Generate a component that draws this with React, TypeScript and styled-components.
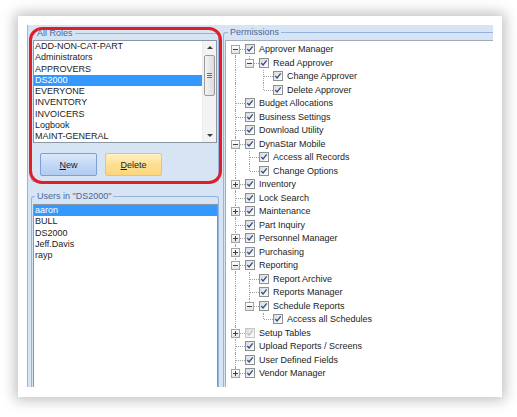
import React from "react";
import styled, { createGlobalStyle } from "styled-components";

type PermNode = {
  label: string;
  open?: boolean;
  collapsed?: boolean;
  dim?: boolean;
  children?: PermNode[];
};

type FlatRow = {
  label: string;
  level: number;
  guides: boolean[];
  hasNext: boolean;
  firstRoot: boolean;
  expander: "open" | "closed" | null;
  dim: boolean;
};

const roles = [
  "ADD-NON-CAT-PART",
  "Administrators",
  "APPROVERS",
  "DS2000",
  "EVERYONE",
  "INVENTORY",
  "INVOICERS",
  "Logbook",
  "MAINT-GENERAL",
];

const users = ["aaron", "BULL", "DS2000", "Jeff.Davis", "rayp"];

const permissions: PermNode[] = [
  {
    label: "Approver Manager",
    open: true,
    children: [
      {
        label: "Read Approver",
        open: true,
        children: [{ label: "Change Approver" }, { label: "Delete Approver" }],
      },
    ],
  },
  { label: "Budget Allocations" },
  { label: "Business Settings" },
  { label: "Download Utility" },
  {
    label: "DynaStar Mobile",
    open: true,
    children: [{ label: "Access all Records" }, { label: "Change Options" }],
  },
  { label: "Inventory", collapsed: true },
  { label: "Lock Search" },
  { label: "Maintenance", collapsed: true },
  { label: "Part Inquiry" },
  { label: "Personnel Manager", collapsed: true },
  { label: "Purchasing", collapsed: true },
  {
    label: "Reporting",
    open: true,
    children: [
      { label: "Report Archive" },
      { label: "Reports Manager" },
      {
        label: "Schedule Reports",
        open: true,
        children: [{ label: "Access all Schedules" }],
      },
    ],
  },
  { label: "Setup Tables", collapsed: true, dim: true },
  { label: "Upload Reports / Screens" },
  { label: "User Defined Fields" },
  { label: "Vendor Manager", collapsed: true },
];

function flatten(nodes: PermNode[], level = 0, guides: boolean[] = []): FlatRow[] {
  const out: FlatRow[] = [];
  nodes.forEach((n, i) => {
    const hasNext = i < nodes.length - 1;
    out.push({
      label: n.label,
      level,
      guides,
      hasNext,
      firstRoot: level === 0 && i === 0,
      expander: n.open ? "open" : n.collapsed ? "closed" : null,
      dim: !!n.dim,
    });
    if (n.open && n.children) {
      out.push(...flatten(n.children, level + 1, [...guides, hasNext]));
    }
  });
  return out;
}

const GlobalStyle = createGlobalStyle`
  html, body {
    margin: 0;
    padding: 0;
    background: #ffffff;
  }
  body {
    font-family: "Liberation Sans", Arial, sans-serif;
  }
`;

const Page = styled.div`
  width: 517px;
  height: 417px;
  overflow: hidden;
  box-sizing: border-box;
  padding: 16px 0 0 18px;
  background: #ffffff;
`;

const Window = styled.div`
  width: 484px;
  height: 381px;
  box-sizing: border-box;
  padding: 9px 9px 10px 9px;
  background: #ffffff;
  box-shadow: 0 0 13px 3px rgba(0, 0, 0, 0.26);
`;

const Content = styled.div`
  display: flex;
  height: 100%;
  overflow: hidden;
  background: #d6e4f4;
  border-left: 1px solid #a2b2ca;
  font-size: 9px;
  color: #1c1c1c;
`;

const LeftColumn = styled.div`
  width: 192px;
  display: flex;
  flex-direction: column;
  gap: 9px;
  padding: 3px 1px 0 3px;
  box-sizing: border-box;
`;

const RightColumn = styled.div`
  flex: 1;
  display: flex;
  flex-direction: column;
  min-width: 0;
  padding: 2px 0 0 3px;
`;

const Group = styled.fieldset<{ $grow?: boolean; $open?: boolean }>`
  margin: 0;
  padding: ${(p) => (p.$open ? "3px 0 0 1px" : "2px 1px 5px 1px")};
  min-width: 0;
  border: 1px solid #93b3de;
  border-radius: 3px;
  ${(p) => (p.$grow ? "flex: 1; display: flex; flex-direction: column;" : "")}
  ${(p) => (p.$open ? "border-bottom: none; border-bottom-left-radius: 0; border-bottom-right-radius: 0;" : "")}
`;

const OpenRightGroup = styled(Group)`
  border-right: none;
  border-top-right-radius: 0;
`;

const Legend = styled.legend<{ $offset?: number }>`
  margin-left: ${(p) => p.$offset ?? 2}px;
  padding: 0 2px;
  font-size: 9px;
  line-height: 10px;
  color: #4b6796;
`;

const Highlighted = styled.div`
  position: relative;
`;

const Ring = styled.div`
  position: absolute;
  left: -2px;
  right: -3px;
  top: -1px;
  bottom: -2px;
  border: 3px solid #e31d25;
  border-radius: 13px;
  pointer-events: none;
`;

const ListBox = styled.div<{ $height?: number }>`
  display: flex;
  background: #ffffff;
  border: 1px solid #8d96a4;
  box-sizing: border-box;
  ${(p) => (p.$height ? `height: ${p.$height}px;` : "flex: 1; border-bottom: none;")}
`;

const Items = styled.div`
  flex: 1;
  min-width: 0;
`;

const Item = styled.div<{ $selected?: boolean }>`
  height: 11.25px;
  line-height: 11.25px;
  padding-left: 1px;
  white-space: nowrap;
  color: ${(p) => (p.$selected ? "#ffffff" : "#1c1c1c")};
  background: ${(p) => (p.$selected ? "#3399ff" : "transparent")};
`;

const ScrollBar = styled.div`
  width: 14px;
  display: flex;
  flex-direction: column;
  align-items: center;
  background: #f3f3f3;
  border-left: 1px solid #ececec;
  box-sizing: border-box;
`;

const Arrow = styled.div<{ $down?: boolean }>`
  height: 13px;
  width: 100%;
  display: flex;
  align-items: center;
  justify-content: center;
  &::before {
    content: "";
    border-left: 3px solid transparent;
    border-right: 3px solid transparent;
    ${(p) =>
      p.$down ? "border-top: 3px solid #3c3c3c;" : "border-bottom: 3px solid #3c3c3c;"}
  }
`;

const Thumb = styled.div`
  margin-top: 1px;
  width: 11px;
  height: 41px;
  box-sizing: border-box;
  border: 1px solid #9a9a9a;
  border-radius: 2px;
  background: linear-gradient(90deg, #f4f4f4, #dcdcdc);
  display: flex;
  align-items: center;
  justify-content: center;
  &::before {
    content: "";
    width: 5px;
    height: 5px;
    background: repeating-linear-gradient(
      180deg,
      #6f6f6f 0,
      #6f6f6f 1px,
      transparent 1px,
      transparent 2px
    );
  }
`;

const Spacer = styled.div`
  flex: 1;
`;

const ButtonRow = styled.div`
  display: flex;
  gap: 8px;
  margin: 10px 0 0 7px;
`;

const Button = styled.button<{ $tone: "blue" | "amber" }>`
  width: 57px;
  height: 23px;
  padding: 0;
  border-radius: 2px;
  font-family: "Liberation Sans", Arial, sans-serif;
  font-size: 9px;
  color: #1c1c1c;
  border: 1px solid ${(p) => (p.$tone === "blue" ? "#7d9fd4" : "#e9c46b")};
  background: ${(p) =>
    p.$tone === "blue"
      ? "linear-gradient(180deg, #dbe8fb 0%, #c3d8f6 50%, #b1cbf1 100%)"
      : "linear-gradient(180deg, #fff1c4 0%, #fddf93 50%, #fcd57c 100%)"};
  u {
    text-decoration: underline;
  }
`;

const Tree = styled.div`
  flex: 1;
  background: #ffffff;
  border-top: 1px solid #a3acb8;
  border-left: 1px solid #a3acb8;
  padding: 1.5px 0 0 2px;
`;

const Row = styled.div`
  display: flex;
  align-items: center;
  height: 13.5px;
  white-space: nowrap;
`;

const Guide = styled.div<{ $line: boolean }>`
  width: 14px;
  height: 100%;
  flex: none;
  box-sizing: border-box;
  position: relative;
  &::before {
    content: "";
    position: absolute;
    left: 7px;
    top: 0;
    bottom: 0;
    border-left: ${(p) => (p.$line ? "1px dotted #a0a0a0" : "none")};
  }
`;

const Connector = styled.div<{ $next: boolean; $first: boolean }>`
  width: 17px;
  height: 100%;
  flex: none;
  position: relative;
  &::before {
    content: "";
    position: absolute;
    left: 7px;
    top: ${(p) => (p.$first ? "50%" : "0")};
    bottom: ${(p) => (p.$next ? "0" : "50%")};
    border-left: 1px dotted #a0a0a0;
  }
  &::after {
    content: "";
    position: absolute;
    left: 8px;
    right: 0;
    top: 50%;
    border-top: 1px dotted #a0a0a0;
  }
`;

const Expander = styled.span`
  position: absolute;
  z-index: 1;
  left: 3px;
  top: calc(50% - 4px);
  width: 9px;
  height: 9px;
  box-sizing: border-box;
  border: 1px solid #a4a4a4;
  background: linear-gradient(180deg, #ffffff, #e3e3e3);
  display: flex;
  align-items: center;
  justify-content: center;
`;

const CheckBox = styled.span<{ $dim?: boolean }>`
  width: 10px;
  height: 10px;
  flex: none;
  box-sizing: border-box;
  border: 1px solid ${(p) => (p.$dim ? "#c6c6c6" : "#8e8f8f")};
  background: linear-gradient(135deg, #dadada 0%, #f4f4f4 70%, #ffffff 100%);
  display: flex;
  align-items: center;
  justify-content: center;
`;

const Label = styled.span`
  margin-left: 4px;
  font-size: 9px;
  color: #1c1c1c;
`;

function ExpanderGlyph({ open }: { open: boolean }) {
  return (
    <svg width="7" height="7" viewBox="0 0 7 7">
      <line x1="1" y1="3.5" x2="6" y2="3.5" stroke="#3f3f3f" strokeWidth="1" />
      {!open && <line x1="3.5" y1="1" x2="3.5" y2="6" stroke="#3f3f3f" strokeWidth="1" />}
    </svg>
  );
}

function CheckMark({ dim }: { dim?: boolean }) {
  return (
    <svg width="8" height="8" viewBox="0 0 8 8">
      <path
        d="M1.3 4 L3.1 6 L6.7 1.4"
        fill="none"
        stroke={dim ? "#b9bdc6" : "#2f4f93"}
        strokeWidth="1.3"
      />
    </svg>
  );
}

function TreeRow({ row }: { row: FlatRow }) {
  return (
    <Row>
      {row.guides.map((g, i) => (
        <Guide key={i} $line={g} />
      ))}
      <Connector $next={row.hasNext} $first={row.firstRoot}>
        {row.expander && (
          <Expander>
            <ExpanderGlyph open={row.expander === "open"} />
          </Expander>
        )}
      </Connector>
      <CheckBox $dim={row.dim}>
        <CheckMark dim={row.dim} />
      </CheckBox>
      <Label>{row.label}</Label>
    </Row>
  );
}

export default function App() {
  const rows = flatten(permissions);
  return (
    <>
      <GlobalStyle />
      <Page>
        <Window>
          <Content>
            <LeftColumn>
              <Highlighted>
                <Group>
                  <Legend>All Roles</Legend>
                  <ListBox $height={103}>
                    <Items>
                      {roles.map((r) => (
                        <Item key={r} $selected={r === "DS2000"}>
                          {r}
                        </Item>
                      ))}
                    </Items>
                    <ScrollBar>
                      <Arrow />
                      <Thumb />
                      <Spacer />
                      <Arrow $down />
                    </ScrollBar>
                  </ListBox>
                  <ButtonRow>
                    <Button $tone="blue">
                      <u>N</u>ew
                    </Button>
                    <Button $tone="amber">
                      <u>D</u>elete
                    </Button>
                  </ButtonRow>
                </Group>
                <Ring />
              </Highlighted>
              <Group $grow $open>
                <Legend>Users in "DS2000"</Legend>
                <ListBox>
                  <Items>
                    {users.map((u) => (
                      <Item key={u} $selected={u === "aaron"}>
                        {u}
                      </Item>
                    ))}
                  </Items>
                </ListBox>
              </Group>
            </LeftColumn>
            <RightColumn>
              <OpenRightGroup $grow $open>
                <Legend $offset={3}>Permissions</Legend>
                <Tree>
                  {rows.map((r) => (
                    <TreeRow key={r.label} row={r} />
                  ))}
                </Tree>
              </OpenRightGroup>
            </RightColumn>
          </Content>
        </Window>
      </Page>
    </>
  );
}
